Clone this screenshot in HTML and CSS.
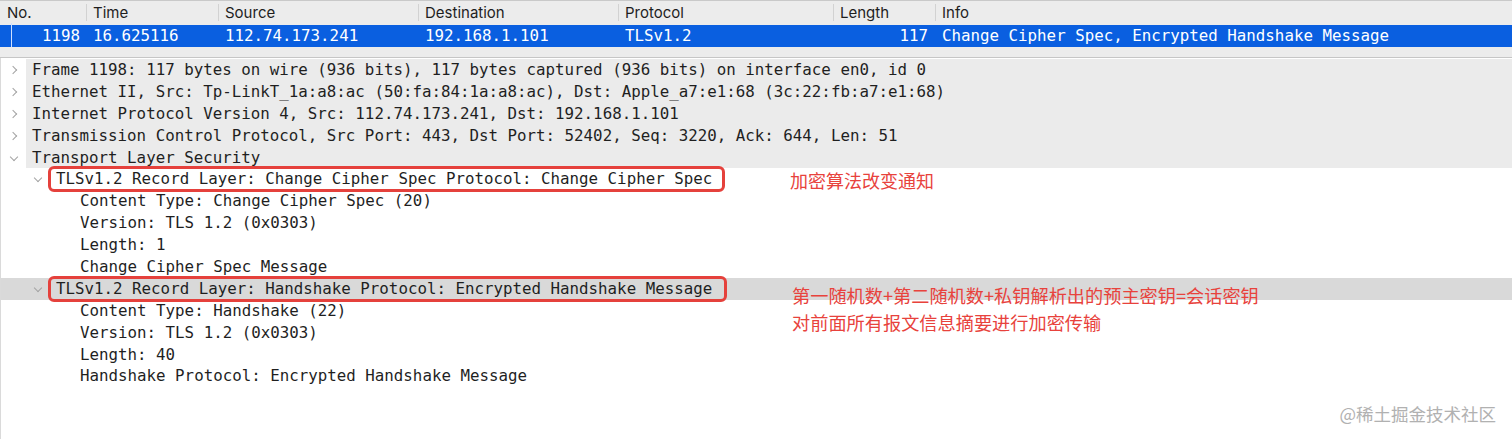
FILE: index.html
```html
<!DOCTYPE html>
<html lang="zh-CN">
<head>
    <meta charset="UTF-8">
    <meta name="viewport" content="width=device-width, initial-scale=1.0">
    <title>Wireshark - TLS</title>
    <link rel="stylesheet" href="styles.css">
</head>
<body>
    <div class="packet-list">
        <div class="list-header">
            <div class="col c-no">No.</div>
            <div class="col c-time">Time</div>
            <div class="col c-src">Source</div>
            <div class="col c-dst">Destination</div>
            <div class="col c-proto">Protocol</div>
            <div class="col c-len">Length</div>
            <div class="col c-info">Info</div>
        </div>
        <div class="list-row selected">
            <div class="cell c-no num">1198</div>
            <div class="cell c-time">16.625116</div>
            <div class="cell c-src">112.74.173.241</div>
            <div class="cell c-dst">192.168.1.101</div>
            <div class="cell c-proto">TLSv1.2</div>
            <div class="cell c-len num">117</div>
            <div class="cell c-info">Change Cipher Spec, Encrypted Handshake Message</div>
        </div>
        <div class="list-rest"></div>
    </div>

    <div class="details">
        <div class="tree-row lv0 shaded"><span class="arrow closed"></span>Frame 1198: 117 bytes on wire (936 bits), 117 bytes captured (936 bits) on interface en0, id 0</div>
        <div class="tree-row lv0 shaded"><span class="arrow closed"></span>Ethernet II, Src: Tp-LinkT_1a:a8:ac (50:fa:84:1a:a8:ac), Dst: Apple_a7:e1:68 (3c:22:fb:a7:e1:68)</div>
        <div class="tree-row lv0 shaded"><span class="arrow closed"></span>Internet Protocol Version 4, Src: 112.74.173.241, Dst: 192.168.1.101</div>
        <div class="tree-row lv0 shaded"><span class="arrow closed"></span>Transmission Control Protocol, Src Port: 443, Dst Port: 52402, Seq: 3220, Ack: 644, Len: 51</div>
        <div class="tree-row lv0 shaded"><span class="arrow open"></span>Transport Layer Security</div>
        <div class="tree-row lv1"><span class="arrow open"></span><span class="mark">TLSv1.2 Record Layer: Change Cipher Spec Protocol: Change Cipher Spec</span></div>
        <div class="tree-row lv2"><span class="arrow"></span>Content Type: Change Cipher Spec (20)</div>
        <div class="tree-row lv2"><span class="arrow"></span>Version: TLS 1.2 (0x0303)</div>
        <div class="tree-row lv2"><span class="arrow"></span>Length: 1</div>
        <div class="tree-row lv2"><span class="arrow"></span>Change Cipher Spec Message</div>
        <div class="tree-row lv1 current"><span class="arrow open"></span><span class="mark">TLSv1.2 Record Layer: Handshake Protocol: Encrypted Handshake Message</span></div>
        <div class="tree-row lv2"><span class="arrow"></span>Content Type: Handshake (22)</div>
        <div class="tree-row lv2"><span class="arrow"></span>Version: TLS 1.2 (0x0303)</div>
        <div class="tree-row lv2"><span class="arrow"></span>Length: 40</div>
        <div class="tree-row lv2"><span class="arrow"></span>Handshake Protocol: Encrypted Handshake Message</div>
    </div>

    <!-- 红色批注 -->
    <div class="note note-1">加密算法改变通知</div>
    <div class="note note-2">第一随机数+第二随机数+私钥解析出的预主密钥=会话密钥<br>对前面所有报文信息摘要进行加密传输</div>

    <div class="watermark">@稀土掘金技术社区</div>
</body>
</html>
```

FILE: styles.css
```css
body {
    margin: 0;
    padding: 0;
    background: #ffffff;
    color: #1f1f1f;
    height: 439px;
    overflow: hidden;
    position: relative;
}

.packet-list {
    background: #ececec;
}

.list-header {
    display: flex;
    height: 24px;
    border-top: 1px solid #c9c9c9;
    box-sizing: border-box;
    font-family: 'Inter', 'Liberation Sans', sans-serif;
    font-size: 15px;
    color: #1e1e1e;
    background: #ececec;
}

.col {
    display: flex;
    align-items: center;
    padding-left: 6px;
    box-sizing: border-box;
    border-left: 1px solid #d2d2d2;
    margin: 3px 0;
}

.col.c-no {
    border-left: none;
    padding-left: 7px;
}

.c-no { width: 86px; }
.c-time { width: 132px; }
.c-src { width: 200px; }
.c-dst { width: 200px; }
.c-proto { width: 215px; }
.c-len { width: 102px; }
.c-info { flex: 1; }

.list-row {
    display: flex;
    height: 22px;
    margin-top: 1px;
    font-family: 'DejaVu Sans Mono', monospace;
    font-size: 15.8px;
    line-height: 22px;
    white-space: nowrap;
}

.list-row.selected {
    background: #0a5fe0;
    color: #ffffff;
    position: relative;
}

.list-row.selected::before {
    content: '';
    position: absolute;
    left: 11px;
    top: -2px;
    bottom: 0;
    width: 1px;
    background: #cfe0ff;
}

.cell {
    box-sizing: border-box;
    padding-left: 7px;
}

.cell.num {
    text-align: right;
    padding-left: 0;
    padding-right: 6px;
}

.cell.c-len {
    padding-right: 7px;
}

.list-rest {
    height: 10px;
    border-bottom: 1px solid #c6c6c6;
}

.details {
    font-family: 'DejaVu Sans Mono', monospace;
    font-size: 15.8px;
    border-left: 1px solid #dadada;
    padding-top: 1px;
    height: 400px;
}

.tree-row {
    display: flex;
    align-items: center;
    height: 21.9px;
    line-height: 21.9px;
    white-space: nowrap;
    color: #1f1f1f;
}

.tree-row.lv0 { padding-left: 0; }
.tree-row.lv1 { padding-left: 24px; }
.tree-row.lv2 { padding-left: 48px; }

.tree-row.shaded {
    background: linear-gradient(to right, #ffffff 25px, #ebebeb 25px);
}

.tree-row.current {
    background: #d9d9d9;
}

.arrow {
    width: 31px;
    height: 21.9px;
    flex-shrink: 0;
    position: relative;
}

.arrow.closed::after,
.arrow.open::after {
    content: '';
    position: absolute;
    width: 5px;
    height: 5px;
    border-right: 1.4px solid #a3a3a3;
    border-bottom: 1.4px solid #a3a3a3;
}

.arrow.closed::after {
    left: 9px;
    top: 8px;
    transform: rotate(-45deg);
}

.arrow.open::after {
    left: 10px;
    top: 7px;
    transform: rotate(45deg);
}

.mark {
    display: inline-block;
    line-height: 20px;
    border: 3px solid #e5413c;
    border-radius: 6px;
    margin: -2px 0 -2px -8px;
    padding: 0 10px 0 5px;
}

.tree-row.current .mark {
    padding-right: 12px;
}

.note {
    position: absolute;
    left: 790px;
    font-family: 'Noto Sans CJK SC', 'Noto Sans', sans-serif;
    font-size: 18px;
    color: #e8423c;
    white-space: nowrap;
}

.note-1 {
    top: 167px;
    line-height: 26px;
}

.note-2 {
    top: 282px;
    left: 792px;
    font-size: 18.2px;
    line-height: 27px;
}

.watermark {
    position: absolute;
    right: 16px;
    bottom: 13px;
    font-family: 'Noto Sans CJK SC', 'Noto Sans', sans-serif;
    font-size: 17.5px;
    color: #a9a9a9;
    opacity: 0.9;
}
```
